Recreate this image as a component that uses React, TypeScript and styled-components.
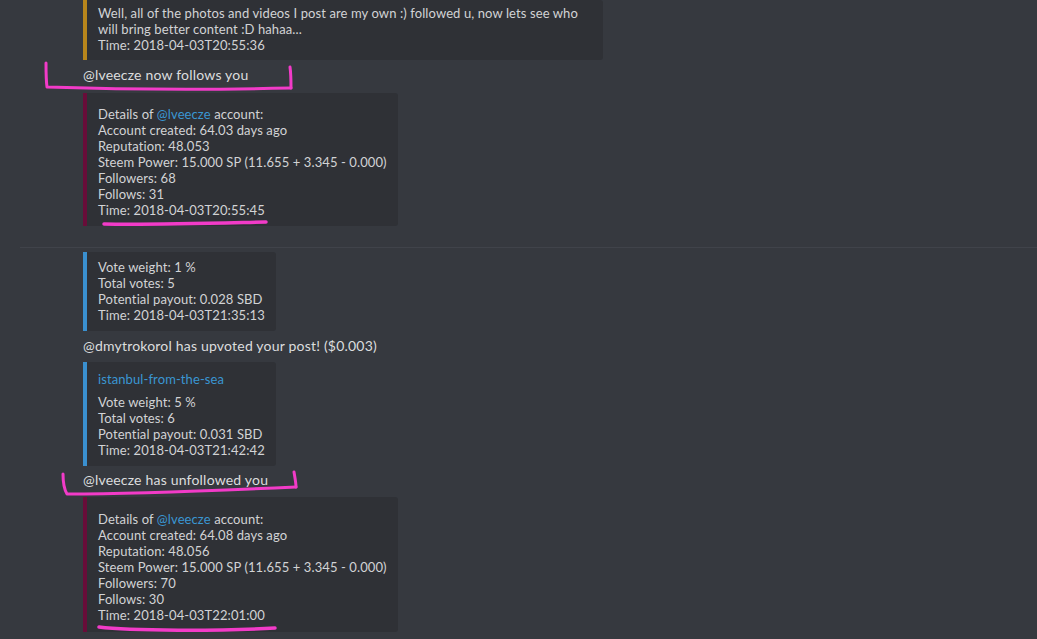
import React from 'react';
import styled, { createGlobalStyle } from 'styled-components';

const GlobalStyle = createGlobalStyle`
  html, body {
    margin: 0;
    padding: 0;
    background-color: #36393f;
  }
  body {
    font-family: Lato, "Noto Sans", sans-serif;
    overflow: hidden;
  }
`;

interface AccountDetails {
  name: string;
  created: string;
  reputation: string;
  power: string;
  followers: number;
  follows: number;
  time: string;
}

interface VoteDetails {
  title?: string;
  weight: string;
  votes: number;
  payout: string;
  time: string;
}

const Page = styled.div`
  position: relative;
  width: 1037px;
  height: 639px;
  overflow: hidden;
`;

const Group = styled.div<{ $padBottom?: number }>`
  display: flex;
  flex-direction: column;
  align-items: flex-start;
  padding-left: 83px;
  padding-bottom: ${(p) => p.$padBottom ?? 0}px;
`;

const Divider = styled.div`
  height: 1px;
  margin-left: 20px;
  background-color: #40434a;
`;

const Message = styled.div<{ $top: number }>`
  margin-top: ${(p) => p.$top}px;
  color: #dcddde;
  font-size: 14px;
  line-height: 20px;
  letter-spacing: 0.2px;
`;

const Embed = styled.div<{ $color: string; $top: number; $padTop: number; $padBottom: number }>`
  margin-top: ${(p) => p.$top}px;
  max-width: 520px;
  box-sizing: border-box;
  background-color: #2f3136;
  border-left: 4px solid ${(p) => p.$color};
  border-radius: 0 3px 3px 0;
  padding: ${(p) => p.$padTop}px 11px ${(p) => p.$padBottom}px 11px;
  color: #d2d3d5;
  font-size: 13px;
  line-height: 16px;
  letter-spacing: 0.1px;
`;

const EmbedTitle = styled.div`
  color: #3a96d2;
  margin-bottom: 7px;
`;

const Line = styled.div``;

const Mention = styled.span`
  color: #3a96d2;
`;

const Annotations = styled.svg`
  position: absolute;
  left: 0;
  top: 0;
  pointer-events: none;
`;

const AccountEmbed: React.FC<{ data: AccountDetails; top: number; padTop: number; padBottom: number }> = ({
  data,
  top,
  padTop,
  padBottom,
}) => (
  <Embed $color="#680d39" $top={top} $padTop={padTop} $padBottom={padBottom}>
    <Line>
      Details of <Mention>@{data.name}</Mention> account:
    </Line>
    <Line>Account created: {data.created} days ago</Line>
    <Line>Reputation: {data.reputation}</Line>
    <Line>Steem Power: {data.power}</Line>
    <Line>Followers: {data.followers}</Line>
    <Line>Follows: {data.follows}</Line>
    <Line>Time: {data.time}</Line>
  </Embed>
);

const VoteEmbed: React.FC<{ data: VoteDetails; top: number; padTop: number }> = ({ data, top, padTop }) => (
  <Embed $color="#3a90d0" $top={top} $padTop={padTop} $padBottom={8}>
    {data.title && <EmbedTitle>{data.title}</EmbedTitle>}
    <Line>Vote weight: {data.weight}</Line>
    <Line>Total votes: {data.votes}</Line>
    <Line>Potential payout: {data.payout}</Line>
    <Line>Time: {data.time}</Line>
  </Embed>
);

const first: AccountDetails = {
  name: 'lveecze',
  created: '64.03',
  reputation: '48.053',
  power: '15.000 SP (11.655 + 3.345 - 0.000)',
  followers: 68,
  follows: 31,
  time: '2018-04-03T20:55:45',
};

const second: AccountDetails = {
  name: 'lveecze',
  created: '64.08',
  reputation: '48.056',
  power: '15.000 SP (11.655 + 3.345 - 0.000)',
  followers: 70,
  follows: 30,
  time: '2018-04-03T22:01:00',
};

const App: React.FC = () => {
  return (
    <Page>
      <GlobalStyle />
      <Group $padBottom={21}>
        <Embed $color="#b8861c" $top={0} $padTop={5} $padBottom={7}>
          Well, all of the photos and videos I post are my own :) followed u, now lets see who will bring
          better content :D hahaa...
          <Line>Time: 2018-04-03T20:55:36</Line>
        </Embed>
        <Message $top={5}>@lveecze now follows you</Message>
        <AccountEmbed data={first} top={8} padTop={13} padBottom={8} />
      </Group>
      <Divider />
      <Group>
        <VoteEmbed
          top={4}
          padTop={7}
          data={{ weight: '1 %', votes: 5, payout: '0.028 SBD', time: '2018-04-03T21:35:13' }}
        />
        <Message $top={5}>@dmytrokorol has upvoted your post! ($0.003)</Message>
        <VoteEmbed
          top={6}
          padTop={9}
          data={{
            title: 'istanbul-from-the-sea',
            weight: '5 %',
            votes: 6,
            payout: '0.031 SBD',
            time: '2018-04-03T21:42:42',
          }}
        />
        <Message $top={4}>@lveecze has unfollowed you</Message>
        <AccountEmbed data={second} top={7} padTop={14} padBottom={9} />
      </Group>

      <Annotations width="1037" height="639" viewBox="0 0 1037 639">
        <g fill="none" stroke="#f23bc8" strokeLinecap="round" strokeLinejoin="round">
          <path strokeWidth="3" d="M46 63 C46 72 46 80 47 87 C110 89 200 90 291 88" />
          <path strokeWidth="3" d="M290 67 C291 74 291 81 291 88" />
          <path strokeWidth="3.5" d="M104 224 C150 225 220 223 266 222" />
          <path strokeWidth="3" d="M63 474 C63 482 64 489 67 494 C140 494 230 490 296 487" />
          <path strokeWidth="3" d="M294 472 C295 478 296 483 296 487" />
          <path strokeWidth="3.5" d="M99 627 C130 631 220 631 275 628" />
        </g>
      </Annotations>
    </Page>
  );
};

export default App;
